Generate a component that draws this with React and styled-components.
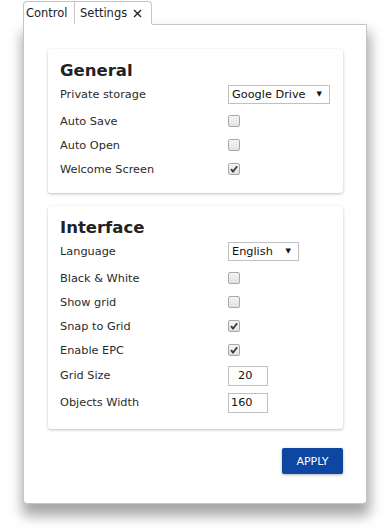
import React, { useState } from "react";
import styled, { createGlobalStyle } from "styled-components";

const GlobalStyle = createGlobalStyle`
  html, body {
    margin: 0;
    padding: 0;
    background: #fff;
  }
  body {
    font-family: "DejaVu Sans", Verdana, sans-serif;
    color: #2b2b2b;
  }
`;

export default function App() {
  const [general, setGeneral] = useState({
    autoSave: false,
    autoOpen: false,
    welcome: true,
  });
  const [ui, setUi] = useState({
    bw: false,
    grid: false,
    snap: true,
    epc: true,
  });

  const toggleGeneral = (key) => setGeneral((s) => ({ ...s, [key]: !s[key] }));
  const toggleUi = (key) => setUi((s) => ({ ...s, [key]: !s[key] }));

  return (
    <Window>
      <GlobalStyle />
      <TabRow>
        <Tab $first>Control</Tab>
        <Tab $active>
          Settings
          <Close aria-label="close">
            <svg width="9" height="9" viewBox="0 0 9 9">
              <path d="M1 1 L8 8 M8 1 L1 8" stroke="#222" strokeWidth="1.4" />
            </svg>
          </Close>
        </Tab>
        <TabFiller />
      </TabRow>

      <Panel>
        <Card>
          <Heading>General</Heading>
          <SelectRow>
            <Label>Private storage</Label>
            <Select $width={102}>
              <span>Google Drive</span>
              <Arrow>▼</Arrow>
            </Select>
          </SelectRow>
          <CheckRow label="Auto Save" checked={general.autoSave} onToggle={() => toggleGeneral("autoSave")} />
          <CheckRow label="Auto Open" checked={general.autoOpen} onToggle={() => toggleGeneral("autoOpen")} />
          <CheckRow label="Welcome Screen" checked={general.welcome} onToggle={() => toggleGeneral("welcome")} />
        </Card>

        <Card $tall>
          <Heading>Interface</Heading>
          <SelectRow>
            <Label>Language</Label>
            <Select $width={71}>
              <span>English</span>
              <Arrow>▼</Arrow>
            </Select>
          </SelectRow>
          <CheckRow label="Black & White" checked={ui.bw} onToggle={() => toggleUi("bw")} />
          <CheckRow label="Show grid" checked={ui.grid} onToggle={() => toggleUi("grid")} />
          <CheckRow label="Snap to Grid" checked={ui.snap} onToggle={() => toggleUi("snap")} />
          <CheckRow label="Enable EPC" checked={ui.epc} onToggle={() => toggleUi("epc")} />
          <InputRow>
            <Label>Grid Size</Label>
            <NumberInput defaultValue="20" $indent={9} />
          </InputRow>
          <InputRow>
            <Label>Objects Width</Label>
            <NumberInput defaultValue="160" $indent={2} />
          </InputRow>
        </Card>

        <Footer>
          <ApplyButton type="button">APPLY</ApplyButton>
        </Footer>
      </Panel>
    </Window>
  );
}

function CheckRow({ label, checked, onToggle }) {
  return (
    <Row>
      <Label>{label}</Label>
      <Check type="button" onClick={onToggle} aria-pressed={checked}>
        {checked && (
          <svg width="10" height="10" viewBox="0 0 10 10">
            <path d="M2 5.2 L4 7.6 L8.2 2.2" fill="none" stroke="#3a3a3a" strokeWidth="1.8" />
          </svg>
        )}
      </Check>
    </Row>
  );
}

const Window = styled.div`
  width: 344px;
  padding: 1px 0 28px 23px;
`;

const TabRow = styled.div`
  display: flex;
  height: 23px;
`;

const Tab = styled.div`
  display: flex;
  align-items: center;
  box-sizing: border-box;
  height: 23px;
  padding: ${(p) => (p.$first ? "0 5px 0 2px" : "0 5px 0 5px")};
  width: ${(p) => (p.$first ? "52px" : "77px")};
  border: 1px solid #c4c4c4;
  border-bottom: none;
  border-left: ${(p) => (p.$first ? "1px solid #c4c4c4" : "none")};
  border-radius: ${(p) => (p.$first ? "4px 0 0 0" : "0 4px 0 0")};
  background: #fff;
  font-size: 11.5px;
  color: #222;
  white-space: nowrap;
`;

const Close = styled.span`
  display: inline-flex;
  margin-left: auto;
  margin-right: 4px;
`;

const TabFiller = styled.div`
  flex: 1;
  border-bottom: 1px solid #c4c4c4;
  margin-bottom: -1px;
`;

const Panel = styled.div`
  box-sizing: border-box;
  border: 1px solid #c4c4c4;
  border-top: none;
  border-radius: 0 0 4px 4px;
  padding: 25px 23px 29px 24px;
  background: #fff;
  box-shadow: 1px 10px 13px 2px rgba(0, 0, 0, 0.35);
  display: flex;
  flex-direction: column;
  gap: 13px;
`;

const Card = styled.section`
  box-sizing: border-box;
  width: 295px;
  padding: 10px 12px ${(p) => (p.$tall ? "13px" : "12px")};
  background: #fff;
  border-radius: 3px;
  box-shadow: 0 1px 3px rgba(0, 0, 0, 0.25);
`;

const Heading = styled.h2`
  margin: 0;
  height: 24px;
  line-height: 24px;
  font-size: 16.5px;
  font-weight: bold;
  color: #222;
`;

const Row = styled.div`
  display: grid;
  grid-template-columns: 168px 1fr;
  align-items: center;
  height: 24px;
`;

const SelectRow = styled(Row)`
  height: 22px;
  margin-bottom: 4px;
`;

const InputRow = styled(Row)`
  height: 27px;
`;

const Label = styled.span`
  font-size: 11.3px;
  color: #2b2b2b;
`;

const Select = styled.div`
  box-sizing: border-box;
  display: flex;
  align-items: center;
  width: ${(p) => p.$width}px;
  height: 19px;
  padding: 0 7px 0 3px;
  border: 1px solid #c0c0c0;
  background: #fff;
  font-size: 11.3px;
  color: #111;
`;

const Arrow = styled.span`
  margin-left: auto;
  font-size: 7px;
  color: #111;
`;

const Check = styled.button`
  box-sizing: border-box;
  display: flex;
  align-items: center;
  justify-content: center;
  width: 12px;
  height: 12px;
  padding: 0;
  border: 1px solid #a8a8a8;
  border-radius: 2px;
  background: linear-gradient(#f4f4f4, #e2e2e2);
  cursor: pointer;
`;

const NumberInput = styled.input`
  box-sizing: border-box;
  width: 40px;
  height: 20px;
  padding: 0 0 0 ${(p) => p.$indent}px;
  border: 1px solid #c0c0c0;
  font-family: inherit;
  font-size: 11.3px;
  color: #111;
  outline: none;
`;

const Footer = styled.div`
  display: flex;
  justify-content: flex-end;
  width: 295px;
  margin-top: 6px;
`;

const ApplyButton = styled.button`
  width: 61px;
  height: 26px;
  border: none;
  border-radius: 2px;
  background: #0d47a1;
  color: #fff;
  font-family: inherit;
  font-size: 11px;
  box-shadow: 0 1px 3px rgba(0, 0, 0, 0.3);
  cursor: pointer;
`;
